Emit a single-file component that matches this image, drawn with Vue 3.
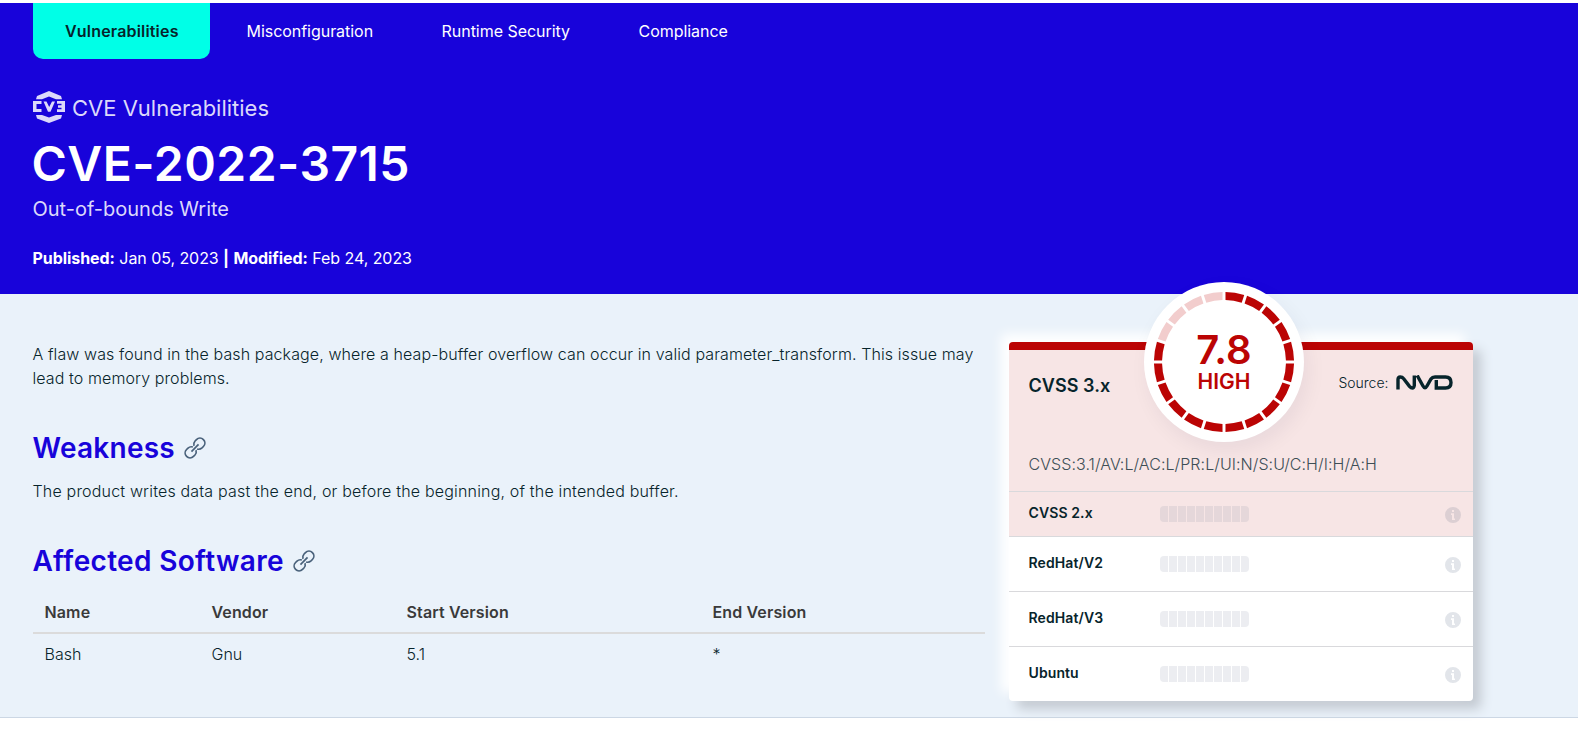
<script setup>
const tabs = ['Vulnerabilities', 'Misconfiguration', 'Runtime Security', 'Compliance']
const scores = ['CVSS 2.x', 'RedHat/V2', 'RedHat/V3', 'Ubuntu']
const segments = Array.from({ length: 20 }, (_, i) => ({ angle: i * 18 + 9, on: i < 16 }))
</script>

<template>
  <div class="page">
    <header class="hero">
      <nav class="tabs">
        <a v-for="(tab, i) in tabs" :key="tab" class="tab" :class="{ active: i === 0 }">{{ tab }}</a>
      </nav>
      <div class="crumb">
        <svg class="logo" viewBox="0 0 32 32" fill="#dcd9fa">
          <path d="M16 0 28 5 29 8.300H23L16 5.500 9 8.300H3L4 5Z" />
          <path d="M16 32 28 27.500 29 24H23L16 26.500 9 24H3L4 27.500Z" />
          <path d="M0 10H8.500V13H3.500V18H8.500V21H0Z" />
          <path d="M10.500 10.500H13.500L16.200 16 19 10.500H22L17.500 20.800H15Z" />
          <path d="M24 10H32V21H24V18.300H28.500V16.800H25V14.300H28.500V12.700H24Z" />
        </svg>
        <span>CVE Vulnerabilities</span>
      </div>
      <h1>CVE-2022-3715</h1>
      <p class="subtitle">Out-of-bounds Write</p>
      <p class="dates"><b>Published:</b> Jan 05, 2023 <b class="bar">|</b> <b>Modified:</b> Feb 24, 2023</p>
    </header>

    <main class="content">
      <article class="details">
        <p class="text">A flaw was found in the bash package, where a heap-buffer overflow can occur in valid parameter_transform. This issue may lead to memory problems.</p>
        <h2>Weakness
          <svg class="link" viewBox="-11 -11 22 22"><g transform="rotate(-45)"><path d="M-5 0H5" /><path d="M-.8 -2.200A5 5 0 0 0 -5 -4.900H-7A4.900 4.900 0 0 0 -7 4.900H-5A5 5 0 0 0 -.8 2.200" /><path d="M.8 -2.200A5 5 0 0 1 5 -4.900H7A4.900 4.900 0 0 1 7 4.900H5A5 5 0 0 1 .8 2.200" /></g></svg>
        </h2>
        <p class="text wide">The product writes data past the end, or before the beginning, of the intended buffer.</p>
        <h2 class="software">Affected Software
          <svg class="link" viewBox="-11 -11 22 22"><g transform="rotate(-45)"><path d="M-5 0H5" /><path d="M-.8 -2.200A5 5 0 0 0 -5 -4.900H-7A4.900 4.900 0 0 0 -7 4.900H-5A5 5 0 0 0 -.8 2.200" /><path d="M.8 -2.200A5 5 0 0 1 5 -4.900H7A4.900 4.900 0 0 1 7 4.900H5A5 5 0 0 1 .8 2.200" /></g></svg>
        </h2>
        <table>
          <colgroup><col class="c1" /><col class="c2" /><col class="c3" /><col /></colgroup>
          <thead><tr><th>Name</th><th>Vendor</th><th>Start Version</th><th>End Version</th></tr></thead>
          <tbody><tr><td>Bash</td><td>Gnu</td><td>5.1</td><td>*</td></tr></tbody>
        </table>
      </article>

      <aside class="card">
        <div class="gauge">
          <svg class="ring" viewBox="-80 -80 160 160">
            <path
              v-for="s in segments" :key="s.angle"
              d="M-9.500 -69.400A70 70 0 0 1 9.500 -69.400L8.200 -61.400A62 62 0 0 0 -8.200 -61.400Z"
              :fill="s.on ? '#bb0404' : '#f2cdcd'" :transform="`rotate(${s.angle})`"
            />
          </svg>
          <strong>7.8</strong>
          <span>HIGH</span>
        </div>
        <section class="primary">
          <div class="row-top">
            <h3>CVSS 3.x</h3>
            <div class="source">
              <span>Source:</span>
              <svg class="nvd" viewBox="0 0 57 15" fill="none" stroke="#07242b" stroke-width="3.400">
                <path d="M2 14.500V4.500Q2 2 4.200 2T7.500 3.500L13.500 11.300Q15 13 16.400 13T18.300 10.500V.5" />
                <path d="M21.200 .5 27 11Q29 14.600 31 11L35 4Q36.300 2 39 2H49.500Q55 2 55 7.500T49.500 13H40.300V5" />
              </svg>
            </div>
          </div>
          <p class="vector">CVSS:3.1/AV:L/AC:L/PR:L/UI:N/S:U/C:H/I:H/A:H</p>
        </section>
        <div v-for="(name, i) in scores" :key="name" class="score" :class="{ tinted: i === 0 }">
          <b>{{ name }}</b>
          <div class="meter"><i v-for="n in 10" :key="n"></i></div>
          <svg class="info" viewBox="0 0 16 16"><path fill-rule="evenodd" d="M8 0A8 8 0 1 0 8 16 8 8 0 1 0 8 0ZM7 3H9V5H7ZM6 6.200H9V11.500H10V13H7V8H6Z" /></svg>
        </div>
      </aside>
    </main>
  </div>
</template>

<style>
body { margin: 0; background: #fff; overflow: hidden; }
</style>

<style scoped>
* { box-sizing: border-box; }
.page { padding-top: 3px; height: 734px; font-family: Inter, sans-serif; font-size: 16px; color: #07242b; }
h1, h2, h3, p { margin: 0; }
.hero { height: 291px; padding-left: 32.500px; background: #1803da; color: #fff; }
.tabs { display: flex; gap: 4.500px; height: 56px; padding-left: .5px; }
.tab { padding: 0 32px; line-height: 57px; letter-spacing: -.04px; }
.tab.active { background: #00ffe7; color: #07242b; font-weight: 600; letter-spacing: .18px; border-radius: 0 0 10px 10px; width: 177px; }
.crumb { display: flex; align-items: center; gap: 7px; margin-top: 32px; height: 32px; padding-left: .5px; font-size: 22px; color: #dcd9fa; }
.crumb span { padding-top: 1px; }
.logo { width: 32px; height: 32px; }
h1 { margin-top: 12px; font-size: 48px; line-height: 58px; font-weight: 600; margin-left: -1px; letter-spacing: .46px; }
.subtitle { margin-top: 4px; font-size: 20px; line-height: 24px; color: #dcd9fa; }
.dates { margin-top: 25px; line-height: 24px; letter-spacing: -.06px; }
.content { display: flex; height: 424px; background: #eaf2fa; border-bottom: 1px solid #ccd7e4; padding-left: 33px; }
.details { width: 952px; padding-top: 48px; }
.text { line-height: 24px; font-weight: 300; letter-spacing: .1px; margin-left: -.5px; }
.wide { letter-spacing: .18px; }
h2 { display: flex; align-items: center; gap: 9px; margin: 42px 0 14px -.5px; font-size: 28px; line-height: 33px; font-weight: 600; letter-spacing: .25px; color: #1803da; }
.link { width: 22px; height: 22px; margin-bottom: 2px; fill: none; stroke: #49617a; stroke-width: 1.700; overflow: visible; }
h2.software { margin-bottom: 14px; letter-spacing: .33px; }
table { width: 952px; table-layout: fixed; border-collapse: collapse; }
.c1 { width: 167px; }
.c2 { width: 195px; }
.c3 { width: 306px; }
th, td { text-align: left; padding: 0 11.500px 1px; }
th { height: 41px; font-weight: 600; color: #3a3a3a; border-bottom: 2px solid #dbdbdb; letter-spacing: .13px; }
td { height: 41px; font-weight: 300; }
.card { position: relative; width: 464px; height: 359px; margin: 48px 0 0 24px; background: #fff; border-radius: 4px; box-shadow: -8px -8px 12px #fff, 8px 8px 12px #c3c9d1; }
.gauge { position: absolute; left: 135px; top: -60px; width: 160px; height: 160px; border-radius: 50%; background: #fff; color: #bb0404; text-align: center; box-shadow: 4px 8px 20px rgba(0, 20, 60, .06); }
.ring { position: absolute; inset: 0; }
.gauge strong { display: block; margin-top: 45px; font-size: 40px; line-height: 45px; font-weight: 600; }
.gauge span { display: block; font-size: 21px; line-height: 20px; font-weight: 600; }
.primary { height: 149px; border-top: 8px solid #bb0404; border-radius: 4px 4px 0 0; background: #f7e5e5; padding: 24px 20px 0 19.500px; }
.row-top { display: flex; justify-content: space-between; height: 78px; }
h3 { font-size: 18px; line-height: 24px; font-weight: 600; letter-spacing: .05px; }
.source { display: flex; align-items: flex-start; font-size: 14px; line-height: 20px; font-weight: 300; margin-top: -1px; }
.nvd { width: 57px; height: 15px; margin: 2px 0 0 7.500px; }
.vector { line-height: 24px; font-weight: 300; color: #3d4e55; letter-spacing: .07px; }
.score { display: flex; align-items: center; height: 55px; padding: 0 12px 0 19.500px; border-top: 1px solid #d9d9dc; font-size: 14px; }
.score b { width: 131.500px; padding-bottom: 3px; font-weight: 600; letter-spacing: .1px; }
.tinted { height: 45px; background: #f7e5e5; }
.meter { display: flex; gap: 1px; height: 16px; border-radius: 4px; overflow: hidden; }
.meter i { width: 8px; background: #ecedf1; }
.tinted .meter i { background: #e5d7da; }
.info { width: 16px; height: 16px; margin: 2px 0 0 auto; fill: #e2e5ea; }
.tinted .info { fill: #dccfd3; }
</style>
